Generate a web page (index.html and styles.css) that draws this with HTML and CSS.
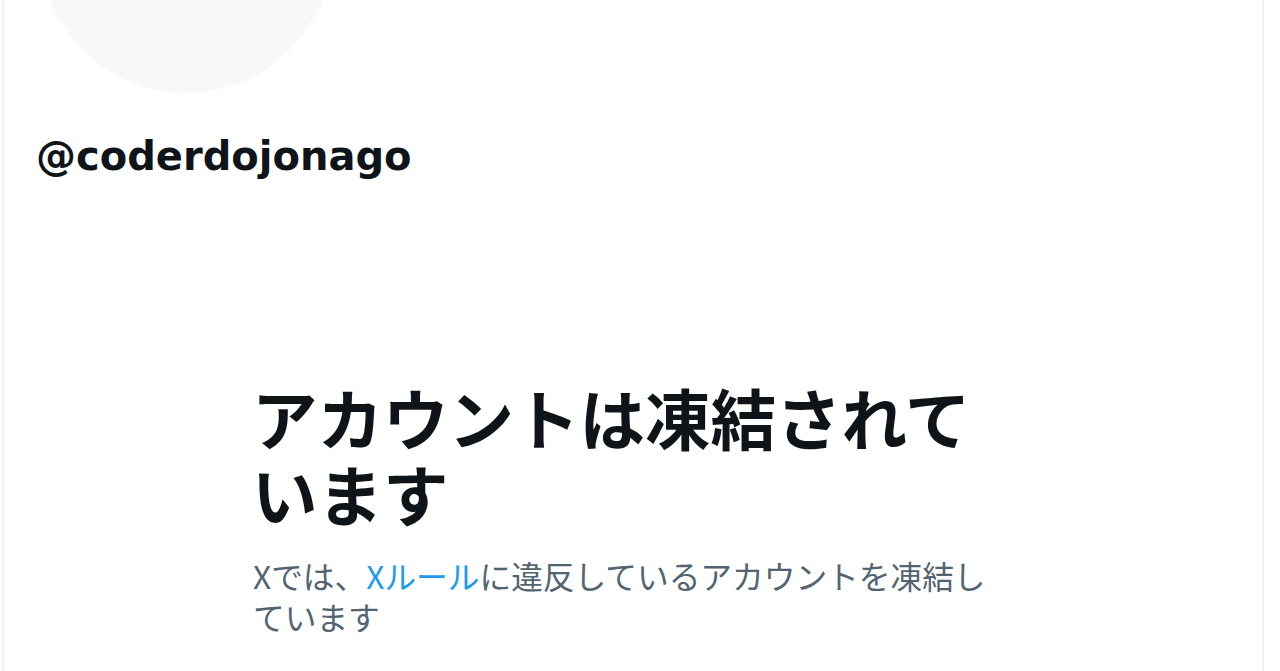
FILE: index.html
```html
<!DOCTYPE html>
<html lang="ja">
<head>
<meta charset="utf-8">
<title>@coderdojonago</title>
<link rel="stylesheet" href="styles.css">
</head>
<body>
<main class="column">
  <div class="profile">
    <div class="avatar"></div>
    <div class="handle">@coderdojonago</div>
  </div>
  <section class="empty">
    <h1 class="empty-title">アカウントは凍結されています</h1>
    <p class="empty-text">Xでは、<a class="link" href="#">Xルール</a>に違反しているアカウントを凍結しています</p>
  </section>
</main>
</body>
</html>
```

FILE: styles.css
```css
html, body {
  margin: 0;
  padding: 0;
  background: #ffffff;
  height: 100%;
  overflow: hidden;
}

.column {
  display: flow-root;
  margin-left: 2px;
  width: 1258px;
  height: 100%;
  border-left: 2px solid #eff3f4;
  border-right: 2px solid #eff3f4;
  box-sizing: content-box;
}

.profile {
  padding-left: 32px;
}

.avatar {
  width: 292px;
  height: 292px;
  border-radius: 50%;
  background: #f7f9f9;
  margin-top: -199px;
  margin-left: 4px;
}

.handle {
  margin-top: 38px;
  font-family: "DejaVu Sans", Verdana, sans-serif;
  font-weight: bold;
  font-size: 40px;
  line-height: 50px;
  color: #0f1419;
}

.empty {
  width: 750px;
  margin-left: 248px;
  margin-top: 198px;
  font-family: "Noto Sans CJK JP", "Noto Sans", sans-serif;
}

.empty-title {
  margin: 0;
  font-size: 65.5px;
  line-height: 76px;
  font-weight: 700;
  color: #0f1419;
}

.empty-text {
  margin: 24px 0 0;
  padding-left: 1px;
  font-size: 31.7px;
  line-height: 41px;
  color: #536471;
}

.link {
  color: #1d9bf0;
  text-decoration: none;
}
```
